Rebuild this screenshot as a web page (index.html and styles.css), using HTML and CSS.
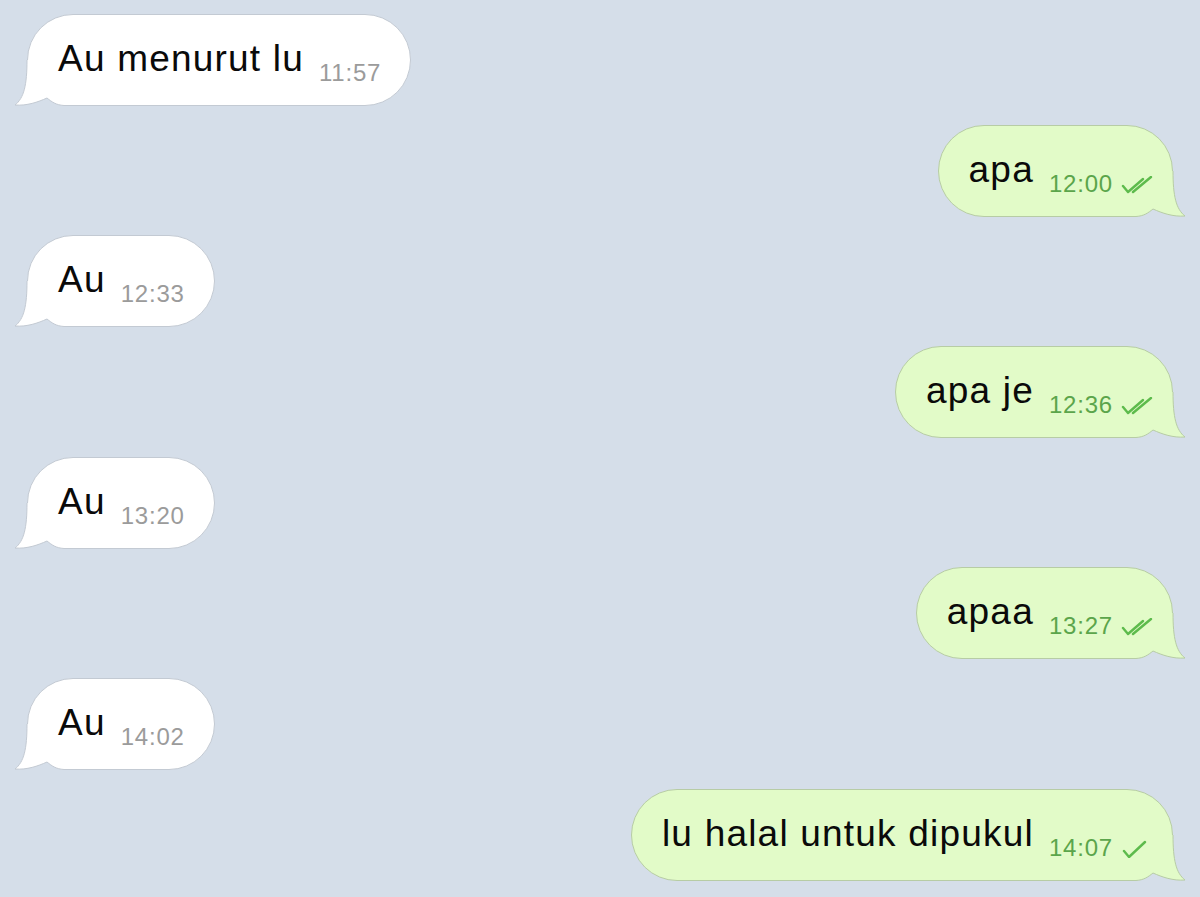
FILE: index.html
```html
<!DOCTYPE html>
<html>
	<head>
		<meta charset="UTF-8">
		<title>Chat</title>
		<link rel="stylesheet" href="styles.css">
	</head>

	<body>
		<div class='chat'>

			<div class='row in'>
				<div class='bubble'>
					<span class='text'>Au menurut lu</span><span class='time'>11:57</span>
					<svg class='tail' viewBox='0 0 70 48'><path class='fill' d='M17,0 C17,25 14,38 5,45 C17,46 28,42 37,38 C42,42 46,45 54,45.5 L70,45.5 L70,0 Z'/><path class='edge' d='M17,0 C17,25 14,38 5,45 C17,46 28,42 37,38 C42,42 46,45 54,45.5 L70,45.5'/></svg>
				</div>
			</div>

			<div class='row out'>
				<div class='bubble'>
					<span class='text'>apa</span><span class='time'>12:00<svg class='check' viewBox='0 0 32 18'><path d='M2,10 L7,16 L22,3 M12,16 L30,1'/></svg></span>
					<svg class='tail' viewBox='0 0 70 48'><path class='fill' d='M17,0 C17,25 14,38 5,45 C17,46 28,42 37,38 C42,42 46,45 54,45.5 L70,45.5 L70,0 Z'/><path class='edge' d='M17,0 C17,25 14,38 5,45 C17,46 28,42 37,38 C42,42 46,45 54,45.5 L70,45.5'/></svg>
				</div>
			</div>

			<div class='row in'>
				<div class='bubble'>
					<span class='text'>Au</span><span class='time'>12:33</span>
					<svg class='tail' viewBox='0 0 70 48'><path class='fill' d='M17,0 C17,25 14,38 5,45 C17,46 28,42 37,38 C42,42 46,45 54,45.5 L70,45.5 L70,0 Z'/><path class='edge' d='M17,0 C17,25 14,38 5,45 C17,46 28,42 37,38 C42,42 46,45 54,45.5 L70,45.5'/></svg>
				</div>
			</div>

			<div class='row out'>
				<div class='bubble'>
					<span class='text'>apa je</span><span class='time'>12:36<svg class='check' viewBox='0 0 32 18'><path d='M2,10 L7,16 L22,3 M12,16 L30,1'/></svg></span>
					<svg class='tail' viewBox='0 0 70 48'><path class='fill' d='M17,0 C17,25 14,38 5,45 C17,46 28,42 37,38 C42,42 46,45 54,45.5 L70,45.5 L70,0 Z'/><path class='edge' d='M17,0 C17,25 14,38 5,45 C17,46 28,42 37,38 C42,42 46,45 54,45.5 L70,45.5'/></svg>
				</div>
			</div>

			<div class='row in'>
				<div class='bubble'>
					<span class='text'>Au</span><span class='time'>13:20</span>
					<svg class='tail' viewBox='0 0 70 48'><path class='fill' d='M17,0 C17,25 14,38 5,45 C17,46 28,42 37,38 C42,42 46,45 54,45.5 L70,45.5 L70,0 Z'/><path class='edge' d='M17,0 C17,25 14,38 5,45 C17,46 28,42 37,38 C42,42 46,45 54,45.5 L70,45.5'/></svg>
				</div>
			</div>

			<div class='row out'>
				<div class='bubble'>
					<span class='text'>apaa</span><span class='time'>13:27<svg class='check' viewBox='0 0 32 18'><path d='M2,10 L7,16 L22,3 M12,16 L30,1'/></svg></span>
					<svg class='tail' viewBox='0 0 70 48'><path class='fill' d='M17,0 C17,25 14,38 5,45 C17,46 28,42 37,38 C42,42 46,45 54,45.5 L70,45.5 L70,0 Z'/><path class='edge' d='M17,0 C17,25 14,38 5,45 C17,46 28,42 37,38 C42,42 46,45 54,45.5 L70,45.5'/></svg>
				</div>
			</div>

			<div class='row in'>
				<div class='bubble'>
					<span class='text'>Au</span><span class='time'>14:02</span>
					<svg class='tail' viewBox='0 0 70 48'><path class='fill' d='M17,0 C17,25 14,38 5,45 C17,46 28,42 37,38 C42,42 46,45 54,45.5 L70,45.5 L70,0 Z'/><path class='edge' d='M17,0 C17,25 14,38 5,45 C17,46 28,42 37,38 C42,42 46,45 54,45.5 L70,45.5'/></svg>
				</div>
			</div>

			<div class='row out'>
				<div class='bubble'>
					<span class='text'>lu halal untuk dipukul</span><span class='time'>14:07<svg class='check single' viewBox='0 0 26 18'><path d='M3,11 L8,17 L24,2'/></svg></span>
					<svg class='tail' viewBox='0 0 70 48'><path class='fill' d='M17,0 C17,25 14,38 5,45 C17,46 28,42 37,38 C42,42 46,45 54,45.5 L70,45.5 L70,0 Z'/><path class='edge' d='M17,0 C17,25 14,38 5,45 C17,46 28,42 37,38 C42,42 46,45 54,45.5 L70,45.5'/></svg>
				</div>
			</div>

		</div>
	</body>
</html>
```

FILE: styles.css
```css
html, body {
	margin: 0;
	padding: 0;
	height: 100%;
}

body {
	background-color: #D5DEE9;
	font-family: "Liberation Sans", Arial, sans-serif;
	overflow: hidden;
}

.chat {
	display: flex;
	flex-direction: column;
	gap: 18.7px;
	padding: 14px 27px 0 27px;
}

.row {
	display: flex;
}
.row.in { justify-content: flex-start }
.row.out { justify-content: flex-end }

.bubble {
	position: relative;
	box-sizing: border-box;
	height: 92px;
	border-radius: 46px;
	border: 1px solid #C3CAD3;
	background-color: white;
	padding: 0 29px 4px 30px;
	line-height: 88px;
	white-space: nowrap;
}

.out .bubble {
	background-color: #E2FBC8;
	border-color: #B7CCA5;
	padding-right: 19px;
}

/* keep text above the tail */
.bubble .text,
.bubble .time {
	position: relative;
	z-index: 1;
}

.bubble .text {
	font-size: 37px;
	letter-spacing: 1.2px;
	color: #0A0A0A;
}

.bubble .time {
	display: inline-block;
	line-height: 1;
	font-size: 24px;
	letter-spacing: 0.8px;
	color: #9B9B9B;
	margin-left: 15px;
	vertical-align: -10px;
}

.out .bubble .time {
	color: #5BA54B;
}

svg.check {
	width: 32px;
	height: 18px;
	margin-left: 8px;
	vertical-align: -2px;
	fill: none;
	stroke: #5DBB4C;
	stroke-width: 2.4;
	stroke-linecap: round;
	stroke-linejoin: round;
}
svg.check.single {
	width: 26px;
	margin-right: 6px;
}

/* tail drawn over the bottom corner of the bubble */
svg.tail {
	position: absolute;
	width: 70px;
	height: 48px;
	bottom: -3px;
	left: -18px;
}
.out svg.tail {
	left: auto;
	right: -18px;
	transform: scaleX(-1);
}

svg.tail .fill { fill: white }
.out svg.tail .fill { fill: #E2FBC8 }
svg.tail .edge {
	fill: none;
	stroke: #C3CAD3;
	stroke-width: 1;
}
.out svg.tail .edge { stroke: #B7CCA5 }
```
